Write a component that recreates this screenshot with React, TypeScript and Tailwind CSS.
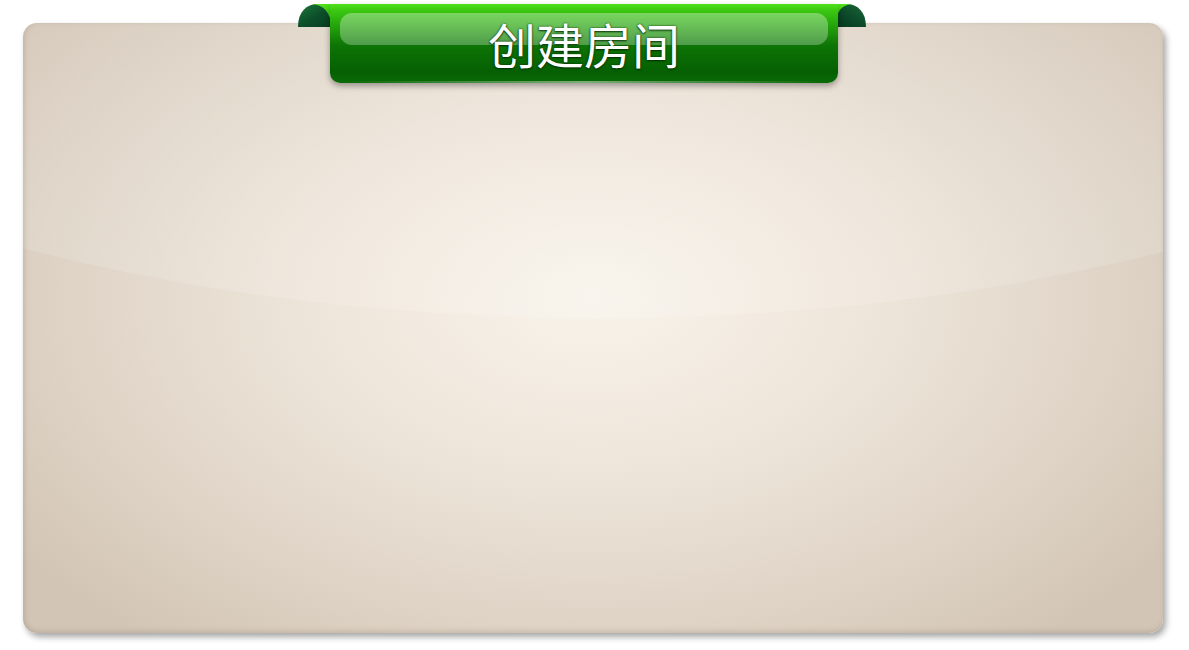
import React from "react";

export default function App() {
  return (
    <div className="relative w-[1189px] h-[650px] bg-white overflow-hidden pt-[23px] pl-[23px]" style={{ fontFamily: '"Noto Sans CJK SC", "Noto Sans", sans-serif' }}>
      {/* Panel */}
      <div className="relative w-[1140px] h-[610px] rounded-[14px] overflow-hidden bg-[radial-gradient(ellipse_62%_72%_at_50%_45%,#f8f3ea_0%,#eee5da_40%,#ded3c5_75%,#d2c5b5_100%)] shadow-[3px_4px_6px_rgba(0,0,0,0.35)]">
        {/* gloss */}
        <div className="absolute left-[-523px] top-[-645px] w-[2200px] h-[940px] rounded-[50%] bg-[linear-gradient(to_bottom,rgba(255,255,255,0.05),rgba(255,255,255,0.14))]" />
        {/* edge shading */}
        <div className="absolute inset-0 rounded-[14px] shadow-[inset_3px_0_4px_rgba(120,100,80,0.12),inset_0_-3px_4px_rgba(120,100,80,0.12)]" />
      </div>

      {/* Ribbon folds */}
      <svg className="absolute left-[290px] top-0" width="590" height="40" viewBox="290 0 590 40">
        <defs>
          <linearGradient id="foldL" x1="0" y1="0" x2="1" y2="1">
            <stop offset="0" stopColor="#1d7a3c" />
            <stop offset="0.5" stopColor="#0c4f2a" />
            <stop offset="1" stopColor="#073a1e" />
          </linearGradient>
          <linearGradient id="foldR" x1="1" y1="0" x2="0" y2="1">
            <stop offset="0" stopColor="#1d6a3a" />
            <stop offset="0.5" stopColor="#0c4a2a" />
            <stop offset="1" stopColor="#05321b" />
          </linearGradient>
          <linearGradient id="capG" x1="0" y1="0" x2="0" y2="1">
            <stop offset="0" stopColor="#4fe21a" />
            <stop offset="1" stopColor="#2eae0d" />
          </linearGradient>
        </defs>
        <path d="M298,27 C298,12 306,4 318,4 L336,4 L336,27 Z" fill="url(#foldL)" />
        <path d="M866,27 C866,12 858,4 846,4 L830,4 L830,27 Z" fill="url(#foldR)" />
        <path d="M312,4 C324,5 330,12 332,27 L340,27 L340,4 Z" fill="url(#capG)" />
        <path d="M852,4 C841,5 836,12 835,27 L826,27 L826,4 Z" fill="url(#capG)" />
      </svg>

      {/* Ribbon main */}
      <div className="absolute left-[330px] top-[4px] w-[508px] h-[79px] rounded-t-[2px] rounded-b-[10px] bg-[linear-gradient(to_bottom,#4fe21a_0%,#3cc812_8%,#229f0b_30%,#0d7505_52%,#066003_86%,#0b6a07_100%)] shadow-[0_3px_6px_rgba(0,0,0,0.35)] flex items-center justify-center">
        <div className="absolute left-[10px] right-[10px] top-[9px] h-[32px] rounded-[12px] bg-[linear-gradient(to_bottom,rgba(255,255,255,0.33),rgba(255,255,255,0.28))]" />
        <div className="absolute left-[14px] right-[14px] bottom-[0px] h-[2px] bg-[linear-gradient(to_right,rgba(255,255,255,0),rgba(255,255,255,0.45),rgba(255,255,255,0))]" />
        <span className="relative text-white text-[48px] leading-none font-normal -mt-[2px] [text-shadow:0_0_2px_rgba(0,40,0,0.9),0_1px_2px_rgba(0,40,0,0.8)]">
          创建房间
        </span>
      </div>
    </div>
  );
}
